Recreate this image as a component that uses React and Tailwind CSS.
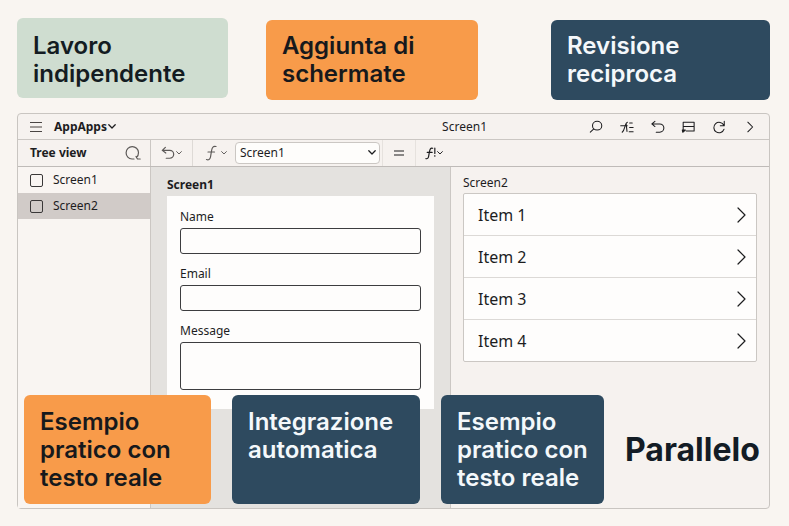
import { useState } from 'react'
import { clsx } from 'clsx'

const screens = ['Screen1', 'Screen2']
const items = ['Item 1', 'Item 2', 'Item 3', 'Item 4']

const tones = {
  green: 'bg-[#cfddd0] text-[#141c22]',
  orange: 'bg-[#f89b4a] text-[#17191c]',
  blue: 'bg-[#2e4a5f] text-[#f4f8fb]',
}

function Card({ tone, className, children }) {
  return (
    <div className={clsx('rounded-md px-4 text-2xl leading-7 font-semibold', tones[tone], className)}>
      {children}
    </div>
  )
}

function Icon({ className, viewBox = '0 0 16 16', strokeWidth = 1.2, children }) {
  return (
    <svg viewBox={viewBox} className={clsx('shrink-0', className)} fill="none" stroke="currentColor" strokeWidth={strokeWidth} strokeLinecap="round" strokeLinejoin="round" aria-hidden="true">
      {children}
    </svg>
  )
}

function ChevronDown({ className }) {
  return (
    <Icon viewBox="0 0 10 6" strokeWidth={1.6} className={className}>
      <path d="M1 1l4 4 4-4" />
    </Icon>
  )
}

const actions = [
  { label: 'Search', icon: <><ellipse cx="9.3" cy="6.5" rx="5.3" ry="5" /><path d="M5.500 10.200L1.500 13.800" /></> },
  { label: 'Checker', icon: <><path d="M.8 6.500h7.500M2.500 14C6 11 5.500 3 8.500 2.500M7 4l1 9M11 3.500h3M11 8.500h4M10.500 13.500h4.500" /></> },
  { label: 'Undo', icon: <><path d="M4.500 1.500L1 4.500l3.500 3M1 4.500h9a4.700 4.700 0 0 1 0 9.400H6" /></> },
  { label: 'Comments', icon: <><path d="M2.500 11V2.500h12.500v10H6M2.500 7.500h12.500" /><path d="M1.500 11.500h3.500l-3 2.500z" fill="currentColor" /></> },
  { label: 'Redo', icon: <><path d="M14 1.500v5H9.500M13.500 6A6 6 0 1 0 13.800 10.500" /></> },
  { label: 'Next', icon: <path d="M5.500 2.500L11 8l-5.500 5.500" /> },
]

function TitleBar() {
  return (
    <header className="flex h-[26px] items-center border-b border-[#cbc7c3] px-3">
      <button type="button" aria-label="Menu" className="text-[#4a4543]">
        <Icon className="size-3" viewBox="0 0 12 12">
          <path d="M.5 1.500h11M.5 6h11M.5 10.500h11" />
        </Icon>
      </button>
      <button type="button" className="ml-3 flex items-center gap-px text-xs font-bold">
        AppApps
        <ChevronDown className="w-2" />
      </button>
      <span className="mr-[102px] ml-auto">Screen1</span>
      <nav className="flex w-[168px] items-center justify-between">
        {actions.map((a) => (
          <button key={a.label} type="button" aria-label={a.label}>
            <Icon className="size-[14px]">{a.icon}</Icon>
          </button>
        ))}
      </nav>
    </header>
  )
}

function Toolbar({ screen, onChange }) {
  return (
    <div className="flex h-[27px] items-stretch border-b border-[#bfbbb8]">
      <div className="flex w-[133px] items-center justify-between border-r border-[#cbc7c3] pr-[9px] pl-3">
        <h2 className="text-xs font-bold">Tree view</h2>
        <button type="button" aria-label="Search tree" className="text-[#5d5a58]">
          <Icon className="size-4">
            <path d="M9 14H7A6.200 6.200 0 1 1 13.500 7.500c0 2.500-.8 4-2 5M11 11.500l1.500 2.500h2.700" />
          </Icon>
        </button>
      </div>
      <button type="button" aria-label="Undo" className="flex w-[42px] items-center justify-center gap-px border-r border-[#dedad6] text-[#5d5a58]">
        <Icon className="size-[14px]" strokeWidth={1.4}>
          <path d="M5 1.500L1.500 5l4 3M1.500 5H10a4.500 4.500 0 0 1 0 9H6" />
        </Icon>
        <ChevronDown className="w-[6px]" />
      </button>
      <button type="button" aria-label="Property" className="flex w-[42px] items-center justify-center gap-1 pl-1 text-[#5d5a58]">
        <Icon className="h-4 w-3" viewBox="0 0 12 16">
          <path d="M11 1.500C8 .5 7 3 6.500 6L5.500 12c-.5 2.500-2 3.300-4 2.500M3 7h6.500" />
        </Icon>
        <ChevronDown className="w-[6px]" />
      </button>
      <div className="relative my-[2px] w-[145px]">
        <select value={screen} onChange={(e) => onChange(e.target.value)} aria-label="Screen" className="h-full w-full appearance-none rounded-sm border border-[#cbc7c3] bg-[#fefdfb] pl-1 text-xs leading-5">
          {screens.map((s) => <option key={s}>{s}</option>)}
        </select>
        <ChevronDown className="pointer-events-none absolute top-2 right-1 w-2" />
      </div>
      <span className="ml-[2px] flex w-[34px] items-center justify-center border-x border-[#e6e2de]">
        <Icon className="size-[10px]" viewBox="0 0 10 10">
          <path d="M.5 3h9M.5 7h9" />
        </Icon>
      </span>
      <button type="button" aria-label="Formula" className="flex w-9 items-center justify-center gap-px">
        <Icon className="h-[13px] w-[11px]" viewBox="0 0 10 12" strokeWidth={1.1}>
          <path d="M7 1.200C5 .5 4.500 2 4 4.500L3.300 8.500C3 10.500 2 11.200.800 10.700M2 5h4.500M9 1v5M9 8v.5" />
        </Icon>
        <ChevronDown className="w-[6px]" />
      </button>
    </div>
  )
}

function TreeView({ active, onSelect }) {
  return (
    <aside className="border-r border-[#cbc7c3] bg-[#f9f5f2]">
      {screens.map((s) => (
        <label key={s} className={clsx('flex h-[26px] items-center gap-[10px] pl-3', s === active && 'bg-[#d1cbc8]')}>
          <input type="checkbox" onChange={() => onSelect(s)} className="size-[13px] appearance-none rounded-xs border border-[#3a3838] checked:bg-[#3a3838]" />
          {s}
        </label>
      ))}
    </aside>
  )
}

function FormScreen() {
  const field = 'mt-[3px] block w-full rounded-[3px] border border-[#3d3d3f] bg-[#fefdfc] px-2'

  return (
    <section className="border-r border-[#cbc7c3] bg-[#e4e2df] px-4 pt-[10px]">
      <h3 className="mb-[3px] text-xs font-bold">Screen1</h3>
      <form className="flex flex-col gap-[11px] bg-[#fefdfc] px-[13px] pt-3 pb-[19px]">
        <label className="text-xs leading-[17px]">
          Name
          <input type="text" className={clsx(field, 'h-[26px]')} />
        </label>
        <label className="text-xs leading-[17px]">
          Email
          <input type="email" className={clsx(field, 'h-[26px]')} />
        </label>
        <label className="text-xs leading-[17px]">
          Message
          <textarea className={clsx(field, 'h-12 resize-none')} />
        </label>
      </form>
    </section>
  )
}

function ListScreen() {
  return (
    <section className="px-3 pt-2">
      <h3 className="mb-[2px] text-xs">Screen2</h3>
      <ul className="divide-y divide-[#dcd9d6] rounded-xs border border-[#cbc7c3] bg-[#fefdfc]">
        {items.map((item) => (
          <li key={item}>
            <button type="button" className="flex h-[41px] w-full items-center justify-between pr-[10px] pl-[14px] text-base">
              {item}
              <Icon className="h-4 w-[9px]" viewBox="0 0 9 16">
                <path d="M1 1l7 7-7 7" />
              </Icon>
            </button>
          </li>
        ))}
      </ul>
    </section>
  )
}

export default function App() {
  const [screen, setScreen] = useState('Screen1')
  const [active, setActive] = useState('Screen2')

  return (
    <main className="min-h-screen bg-[#f9f5f1] py-[18px] pr-[19px] pl-[17px] font-['Inter',sans-serif]">
      <div className="mb-[13px] grid grid-cols-[211fr_212fr_254fr] gap-x-[38px]">
        <Card tone="green" className="h-20 pt-[14px]">Lavoro<br />indipendente</Card>
        <Card tone="orange" className="mt-[2px] h-20 pt-3">Aggiunta di<br />schermate</Card>
        <Card tone="blue" className="mt-[2px] h-20 w-[219px] justify-self-end pt-3">Revisione<br />reciproca</Card>
      </div>

      <div className="relative rounded-sm border border-[#c9c5c1] bg-[#f6f2ef] font-['Noto_Sans',sans-serif] text-xs text-[#1d1d1f]">
        <TitleBar />
        <Toolbar screen={screen} onChange={setScreen} />
        <div className="grid min-h-[341px] grid-cols-[133px_300fr_318fr]">
          <TreeView active={active} onSelect={setActive} />
          <FormScreen />
          <ListScreen />
        </div>

        <div className="absolute inset-x-[6px] bottom-1 grid grid-cols-[187fr_188fr_163fr_138fr] items-center gap-x-[21px] font-['Inter',sans-serif]">
          <Card tone="orange" className="h-[109px] pt-[13px] whitespace-nowrap">Esempio<br />pratico con<br />testo reale</Card>
          <Card tone="blue" className="h-[109px] pt-[13px] whitespace-nowrap">Integrazione<br />automatica</Card>
          <Card tone="blue" className="h-[109px] pt-[13px] whitespace-nowrap">Esempio<br />pratico con<br />testo reale</Card>
          <p className="text-[32px] leading-9 font-bold text-[#131c25]">Parallelo</p>
        </div>
      </div>
    </main>
  )
}
